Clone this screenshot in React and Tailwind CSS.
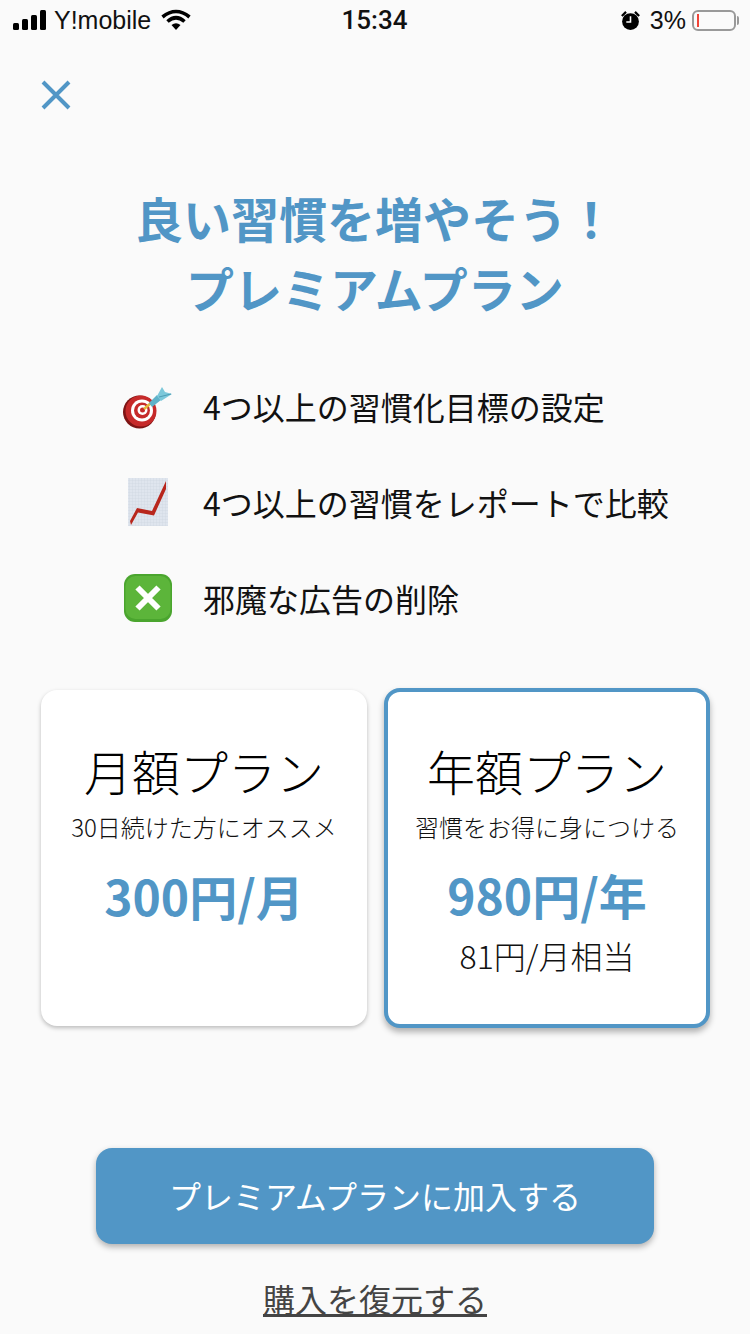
import React from 'react';

const FONT = { fontFamily: '"Noto Sans CJK JP", "Noto Sans", sans-serif' };

const StatusBar = () => (
  <div className="h-10 flex items-center justify-between pl-[13px] pr-[14px] text-[#111]">
    <div className="flex items-center w-[250px]">
      <svg width="34" height="20" viewBox="0 0 34 20" fill="#000">
        <rect x="0" y="13" width="6" height="7" rx="1.5" />
        <rect x="9" y="9" width="6" height="11" rx="1.5" />
        <rect x="18" y="5" width="6" height="15" rx="1.5" />
        <rect x="27" y="0" width="6" height="20" rx="1.5" />
      </svg>
      <span className="ml-[7px] font-['Liberation_Sans',sans-serif] text-[25px] leading-none">Y!mobile</span>
      <svg className="ml-[10px]" width="30" height="22" viewBox="0 0 30 22" fill="none" stroke="#000" strokeWidth="3.6">
        <path d="M1.5 8 Q15 -3 28.500 8" />
        <path d="M6.500 12.500 Q15 5 23.500 12.500" />
        <path d="M15 21 L10.500 16 Q15 12.500 19.500 16 Z" fill="#000" stroke="none" />
      </svg>
    </div>
    <span className="font-['Roboto',sans-serif] text-[26px] font-medium leading-none">15:34</span>
    <div className="flex items-center justify-end w-[250px]">
      <svg width="21" height="21" viewBox="0 0 20 20" fill="#000">
        <circle cx="10" cy="11" r="8" />
        <path d="M1 5 L5 1 L6.500 2.500 L2.500 6.500 Z M19 5 L15 1 L13.500 2.500 L17.500 6.500 Z" />
        <path d="M10 6 V11.500 H6" fill="none" stroke="#fff" strokeWidth="1.500" />
      </svg>
      <span className="ml-[9px] font-['Liberation_Sans',sans-serif] text-[25px] leading-none">3%</span>
      <div className="ml-[6px] relative w-[44px] h-[21px] rounded-[6px] border-2 border-[#999]">
        <div className="absolute left-[3px] top-[2px] w-[2px] h-[13px] bg-[#f04438]" />
        <div className="absolute -right-[5px] top-[4px] w-[2px] h-[9px] rounded-r-sm bg-[#999]" />
      </div>
    </div>
  </div>
);

const DartIcon = () => (
  <svg width="50" height="48" viewBox="0 0 50 48">
    <circle cx="16.500" cy="30" r="16.500" fill="#7d1414" />
    <circle cx="18" cy="29" r="15.500" fill="#c62a2a" />
    <circle cx="19" cy="28.500" r="11" fill="#fff" />
    <circle cx="19" cy="28.500" r="8" fill="#c62a2a" />
    <circle cx="19.500" cy="28" r="5" fill="#fff" />
    <circle cx="19.500" cy="28" r="2.500" fill="#c62a2a" />
    <path d="M21 27 L28 21" stroke="#e5b93c" strokeWidth="2.500" />
    <path d="M26 21 L34 13 L38 18 L29 25 Z" fill="#5fb2c9" />
    <path d="M34 14 L39 5 L42 10 L49 12 L38 19 Z" fill="#7cc8da" />
    <path d="M36 15 L48 12" stroke="#4d9db5" strokeWidth="1" />
  </svg>
);

const ChartIcon = () => (
  <svg width="42" height="48" viewBox="0 0 42 48">
    <defs>
      <pattern id="grid" width="3" height="3" patternUnits="userSpaceOnUse">
        <rect width="3" height="3" fill="#dfe5ee" />
        <path d="M3 0 V3 H0" fill="none" stroke="#c6cfdb" strokeWidth="0.500" />
      </pattern>
    </defs>
    <rect width="40" height="48" x="1" fill="url(#grid)" />
    <path d="M3 43 L10 30 L25 33 L39 3 L39 11 L27 37.500 L11 34.500 L4 47 Z" fill="#b8261c" />
  </svg>
);

const CrossIcon = () => (
  <svg width="48" height="48" viewBox="0 0 48 48">
    <rect width="48" height="48" rx="11" fill="#4aa52e" />
    <rect x="1.500" y="2" width="45" height="43" rx="10" fill="#5cb53a" />
    <path d="M13.500 13.500 L34.500 34.500 M34.500 13.500 L13.500 34.500" stroke="#fff" strokeWidth="6" />
  </svg>
);

const FeatureRow = ({ icon, label }) => (
  <div className="flex items-center h-[96px]">
    <div className="w-[50px] flex justify-center">{icon}</div>
    <span className="ml-[30px] text-[32px] leading-none text-[#111] whitespace-nowrap">{label}</span>
  </div>
);

const App = () => {
  return (
    <div className="w-[750px] h-[1334px] overflow-hidden bg-[#fafafa] flex flex-col" style={FONT}>
      <StatusBar />

      {/* Close */}
      <div className="pl-[41px] pt-[40px]">
        <svg className="block" width="30" height="30" viewBox="0 0 30 30" stroke="#5196c6" strokeWidth="4" fill="none">
          <path d="M2 2 L28 28 M28 2 L2 28" />
        </svg>
      </div>

      {/* Title */}
      <div className="mt-[72px] text-center text-[#5196c6] text-[48px] font-bold leading-[70px]">
        <p>良い習慣を増やそう！</p>
        <p>プレミアムプラン</p>
      </div>

      {/* Features */}
      <div className="mt-[36px] pl-[123px] flex flex-col">
        <FeatureRow icon={<DartIcon />} label="4つ以上の習慣化目標の設定" />
        <FeatureRow icon={<ChartIcon />} label="4つ以上の習慣をレポートで比較" />
        <FeatureRow icon={<CrossIcon />} label="邪魔な広告の削除" />
      </div>

      {/* Plans */}
      <div className="mt-[42px] pl-[41px] flex items-center gap-[17px]">
        <div className="w-[326px] h-[336px] bg-white rounded-[16px] shadow-[0_2px_4px_rgba(0,0,0,0.25)] flex flex-col items-center pt-[50px]">
          <p className="text-[48px] font-light leading-[60px] text-black">月額プラン</p>
          <p className="mt-[11px] text-[24px] font-light leading-[32px] text-[#111]">30日続けた方にオススメ</p>
          <p className="mt-[22px] text-[48px] font-bold leading-[60px] text-[#5196c6]">300円/月</p>
        </div>
        <div className="w-[326px] h-[340px] bg-white rounded-[16px] border-4 border-[#5196c6] shadow-[0_4px_6px_rgba(0,0,0,0.3)] flex flex-col items-center pt-[48px]">
          <p className="text-[48px] font-light leading-[60px] text-black">年額プラン</p>
          <p className="mt-[11px] text-[24px] font-light leading-[32px] text-[#111]">習慣をお得に身につける</p>
          <p className="mt-[21px] text-[48px] font-bold leading-[60px] text-[#5196c6]">980円/年</p>
          <p className="mt-[9px] text-[32px] font-light leading-[44px] text-[#111]">81円/月相当</p>
        </div>
      </div>

      {/* Buttons */}
      <div className="mt-[120px] ml-[96px] w-[558px] h-[96px] pb-[3px] rounded-[16px] bg-[#5196c6] shadow-[0_3px_6px_rgba(0,0,0,0.3)] flex items-center justify-center text-white text-[32px]">
        プレミアムプランに加入する
      </div>
      <div className="mt-[32px] text-center text-[32px] leading-[44px] text-[#444] underline">購入を復元する</div>
    </div>
  );
};

export default App;
